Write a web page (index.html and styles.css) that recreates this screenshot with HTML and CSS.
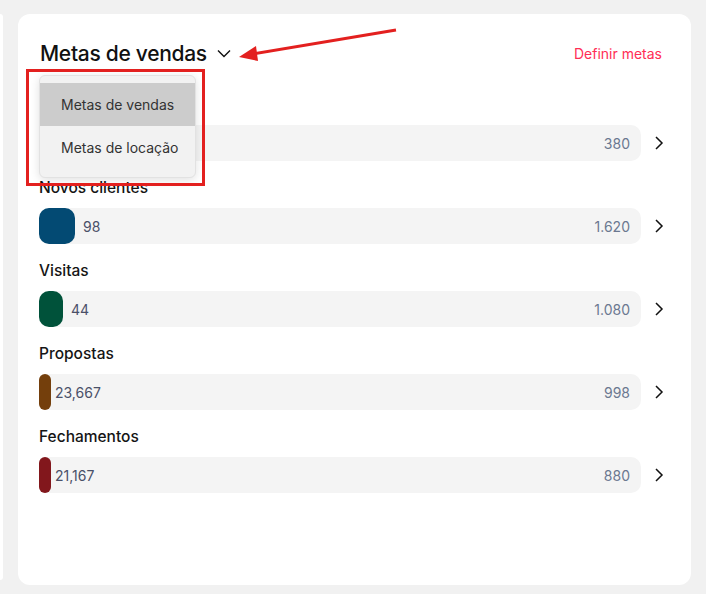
FILE: index.html
```html
<!DOCTYPE html>
<html>

<head>
    <title>Metas</title>
    <link rel="stylesheet" href="styles.css">
</head>

<body>
    <div class="page">
        <div class="stub"></div>
        <div class="card">
            <div class="header">
                <div class="title">
                    Metas de vendas
                    <svg class="caret" width="14" height="9" viewBox="0 0 14 9">
                        <path d="M1 1.5 L7 7.5 L13 1.5" fill="none" stroke="#111" stroke-width="1.4" />
                    </svg>
                </div>
                <span class="define">Definir metas</span>
            </div>

            <!-- first goal sits under the open menu -->
            <div class="goal">
                <div class="goalLabel"></div>
                <div class="goalRow">
                    <div class="bar">
                        <span class="fill" style="width: 60px; background: #6b6b6b"></span>
                        <span class="target">380</span>
                    </div>
                    <svg class="next" width="12" height="16" viewBox="0 0 12 16">
                        <path d="M3 2 L9 8 L3 14" fill="none" stroke="#111" stroke-width="1.5" />
                    </svg>
                </div>
            </div>

            <div class="goal">
                <div class="goalLabel">Novos clientes</div>
                <div class="goalRow">
                    <div class="bar">
                        <span class="fill" style="width: 36px; background: #034a73"></span>
                        <span class="current">98</span>
                        <span class="target">1.620</span>
                    </div>
                    <svg class="next" width="12" height="16" viewBox="0 0 12 16">
                        <path d="M3 2 L9 8 L3 14" fill="none" stroke="#111" stroke-width="1.5" />
                    </svg>
                </div>
            </div>

            <div class="goal">
                <div class="goalLabel">Visitas</div>
                <div class="goalRow">
                    <div class="bar">
                        <span class="fill" style="width: 24px; background: #00523a"></span>
                        <span class="current">44</span>
                        <span class="target">1.080</span>
                    </div>
                    <svg class="next" width="12" height="16" viewBox="0 0 12 16">
                        <path d="M3 2 L9 8 L3 14" fill="none" stroke="#111" stroke-width="1.5" />
                    </svg>
                </div>
            </div>

            <div class="goal">
                <div class="goalLabel">Propostas</div>
                <div class="goalRow">
                    <div class="bar">
                        <span class="fill" style="width: 12px; background: #743f0c"></span>
                        <span class="current thin">23,667</span>
                        <span class="target">998</span>
                    </div>
                    <svg class="next" width="12" height="16" viewBox="0 0 12 16">
                        <path d="M3 2 L9 8 L3 14" fill="none" stroke="#111" stroke-width="1.5" />
                    </svg>
                </div>
            </div>

            <div class="goal">
                <div class="goalLabel">Fechamentos</div>
                <div class="goalRow">
                    <div class="bar">
                        <span class="fill" style="width: 12px; background: #82171c"></span>
                        <span class="current thin">21,167</span>
                        <span class="target">880</span>
                    </div>
                    <svg class="next" width="12" height="16" viewBox="0 0 12 16">
                        <path d="M3 2 L9 8 L3 14" fill="none" stroke="#111" stroke-width="1.5" />
                    </svg>
                </div>
            </div>

            <div class="menu">
                <div class="menuItem active">Metas de vendas</div>
                <div class="menuItem">Metas de locação</div>
            </div>
        </div>
    </div>

    <!-- annotation drawn over the screenshot -->
    <svg class="marks" width="706" height="594" viewBox="0 0 706 594">
        <rect x="27.5" y="70.5" width="176" height="114" fill="none" stroke="#e3201f" stroke-width="3" />
        <line x1="396" y1="30" x2="252" y2="54" stroke="#e3201f" stroke-width="3" />
        <polygon points="239,57 256,46 258,61" fill="#e3201f" />
    </svg>
</body>

</html>
```

FILE: styles.css
```css
body {
    margin: 0;
    background: #f1f1f1;
    font-family: Inter, 'Liberation Sans', sans-serif;
    color: #111;
}

.page {
    display: flex;
    gap: 15px;
    padding: 14px 0 9px;
    height: 571px;
}

.stub {
    width: 3px;
    height: 566px;
    background: #fff;
    border-radius: 0 10px 10px 0;
}

.card {
    position: relative;
    width: 673px;
    background: #fff;
    border-radius: 12px;
    padding: 25px 22px 0 21px;
    box-sizing: border-box;
}

/* header */
.header {
    display: flex;
    align-items: center;
    justify-content: space-between;
    height: 28px;
    margin-bottom: 28px;
}

.title {
    display: flex;
    align-items: center;
    font-size: 21px;
    font-weight: 500;
    letter-spacing: -0.3px;
    padding-left: 1px;
}

.caret {
    margin-left: 10px;
    margin-top: 1px;
}

.define {
    font-size: 14px;
    color: #ff2d55;
    margin-right: 7px;
    margin-top: 0;
}

/* goal rows */
.goal {
    margin-bottom: 17px;
}

.goalLabel {
    font-size: 15.5px;
    font-weight: 500;
    line-height: 20px;
    height: 20px;
    margin-bottom: 10px;
    color: #151515;
}

.goalRow {
    display: flex;
    align-items: center;
}

.bar {
    flex: 1;
    display: flex;
    align-items: center;
    height: 36px;
    background: #f4f4f4;
    border-radius: 10px;
    padding-right: 11px;
    font-size: 14px;
}

.fill {
    height: 36px;
    border-radius: 10px;
}

.current {
    margin-left: 8px;
    color: #4a5068;
}

.current.thin {
    margin-left: 4px;
}

.target {
    margin-left: auto;
    color: #6b7890;
}

.next {
    margin-left: 12px;
    margin-right: 4px;
}

/* dropdown */
.menu {
    position: absolute;
    left: 21px;
    top: 61px;
    width: 157px;
    padding: 7px 0 8px;
    background: #f2f2f2;
    border: 1px solid #e2e2e2;
    border-radius: 6px;
    box-shadow: 0 2px 10px rgba(0, 0, 0, 0.12);
    box-sizing: border-box;
}

.menuItem {
    height: 43px;
    line-height: 43px;
    padding-left: 21px;
    font-size: 14px;
    color: #333;
}

.menuItem.active {
    background: #cccccc;
}

.marks {
    position: absolute;
    left: 0;
    top: 0;
}
```
